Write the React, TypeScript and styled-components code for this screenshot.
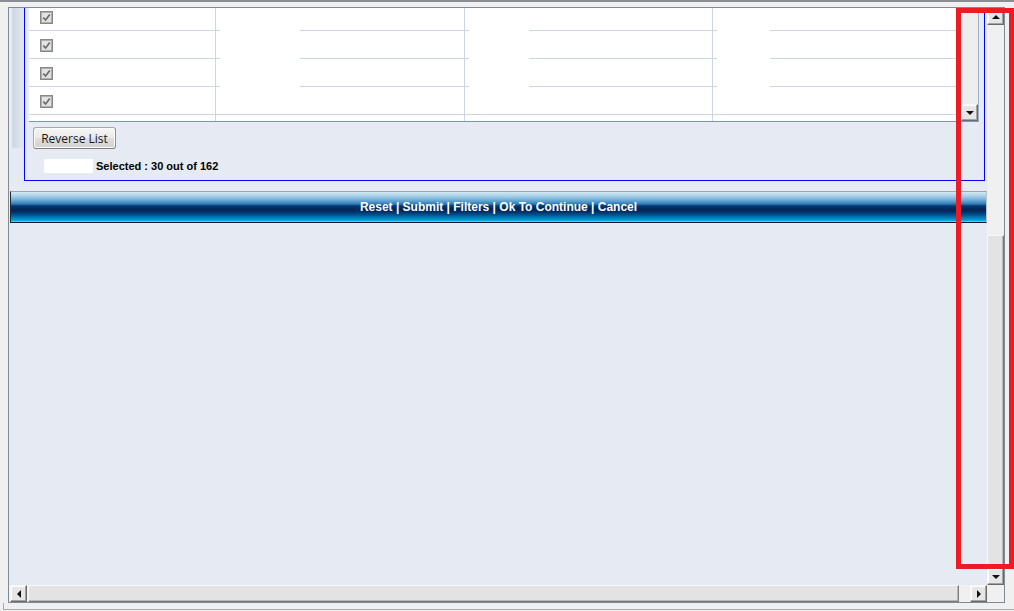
import React, { ReactElement } from 'react';
import styled, { createGlobalStyle, css } from 'styled-components';

const GlobalStyle = createGlobalStyle`
    html, body {
        margin: 0;
        padding: 0;
        background: #f0f0f0;
    }
    body {
        font-family: "Liberation Sans", Arial, sans-serif;
    }
`;

const Frame = styled.div`
    position: relative;
    width: 1014px;
    height: 611px;
    overflow: hidden;
    background: #f0f0f0;
    display: flex;
    flex-direction: column;
`;

const TopEdge = styled.div`
    height: 5px;
    border-top: 2px solid #8a8e93;
    background: #f0f0f0;
`;

const BottomEdge = styled.div`
    height: 6px;
    margin-left: 3px;
    border-bottom: 1px solid #a9a9a9;
    border-left: 1px solid #a9a9a9;
`;

const WindowRow = styled.div`
    display: flex;
    padding-left: 8px;
`;

const Window = styled.div`
    width: 995px;
    height: 594px;
    border: 1px solid #828a94;
    display: grid;
    grid-template-columns: 978px 17px;
    grid-template-rows: 577px 17px;
`;

const Viewport = styled.div`
    overflow: hidden;
    background: #e6eaf2;
`;

// page is scrolled down a little inside the viewport
const Page = styled.div`
    margin-top: -39px;
    display: flex;
    flex-direction: column;
`;

const PageTop = styled.div`
    display: flex;
    align-items: flex-start;
`;

const SideStrip = styled.div`
    width: 14px;
    height: 179px;
    margin-left: 1px;
    background: linear-gradient(to right, #eef2f6 0, #eef2f6 1px, #d3dde6 2px, #cfdae4 4px, #dde4ec 11px, #e5e9f1 14px);
`;

const FieldBox = styled.div`
    width: 950px;
    border: 1px solid #0000ff;
    padding: 4px 5px 7px 4px;
    display: flex;
    flex-direction: column;
    align-items: flex-start;
`;

const ListBox = styled.div`
    display: flex;
    border-top: 1px solid #7f9db9;
    border-bottom: 1px solid #7c97b3;
    border-right: 1px solid #9fb4cb;
    background: #fff;
`;

const ListGrid = styled.div`
    width: 932px;
    height: 146px;
    overflow: hidden;
    display: grid;
    grid-template-columns: 187px 4px 80px 165px 4px 60px 184px 4px 53px 191px;
    grid-auto-rows: 28px;
`;

const Cell = styled.div<{ $col: number; $row: number; $span?: number; $edge?: boolean }>`
    box-sizing: border-box;
    grid-column: ${(p) => p.$col};
    grid-row: ${(p) => `${p.$row} / span ${p.$span ?? 1}`};
    border-bottom: 1px solid #ccd5e4;
    background: #fff;
    display: flex;
    align-items: center;
    ${(p) =>
        p.$edge &&
        css`
            border-right: 1px solid #ccd5e4;
        `}
`;

const CheckBox = styled.span`
    box-sizing: border-box;
    width: 13px;
    height: 13px;
    margin-left: 11px;
    margin-top: 1px;
    border: 1px solid #878787;
    box-shadow: inset 0 0 0 1px #adadad;
    background: #e2e2e2;
    display: flex;
    align-items: center;
    justify-content: center;
`;

const ScrollBar = styled.div<{ $vertical?: boolean }>`
    display: flex;
    flex-direction: ${(p) => (p.$vertical ? 'column' : 'row')};
    background: #f0f0f0;
`;

const ListScroll = styled(ScrollBar)`
    width: 17px;
    height: 146px;
    background: #eeeeee;
`;

const Track = styled.div<{ $gap?: boolean }>`
    flex: ${(p) => (p.$gap ? '0 0 1px' : '1')};
`;

const Thumb = styled.div<{ $vertical?: boolean }>`
    box-sizing: border-box;
    background: #e3e3e3;
    border: 1px solid;
    border-color: #f8f8f8 #7a7a7a #7a7a7a #f8f8f8;
    box-shadow: inset -1px -1px #b8b8b8;
    ${(p) =>
        p.$vertical
            ? css`
                  height: 333px;
              `
            : css`
                  width: 931px;
                  margin-left: 1px;
              `}
`;

const ArrowButton = styled.div`
    box-sizing: border-box;
    flex: none;
    width: 17px;
    height: 17px;
    background: #e6e6e6;
    border: 1px solid;
    border-color: #f6f6f6 #6b6b6b #6b6b6b #f6f6f6;
    box-shadow: inset -1px -1px #a3a3a3, inset 1px 1px #ffffff;
    display: flex;
    align-items: center;
    justify-content: center;
`;

type Dir = 'up' | 'down' | 'left' | 'right';

const Triangle = styled.span<{ $dir: Dir }>`
    width: 0;
    height: 0;
    ${(p) =>
        p.$dir === 'up' &&
        css`
            border-left: 4px solid transparent;
            border-right: 4px solid transparent;
            border-bottom: 4px solid #111;
        `}
    ${(p) =>
        p.$dir === 'down' &&
        css`
            border-left: 4px solid transparent;
            border-right: 4px solid transparent;
            border-top: 4px solid #111;
        `}
    ${(p) =>
        p.$dir === 'left' &&
        css`
            border-top: 4px solid transparent;
            border-bottom: 4px solid transparent;
            border-right: 4px solid #111;
        `}
    ${(p) =>
        p.$dir === 'right' &&
        css`
            border-top: 4px solid transparent;
            border-bottom: 4px solid transparent;
            border-left: 4px solid #111;
        `}
`;

const Arrow = ({ dir }: { dir: Dir }) => (
    <ArrowButton>
        <Triangle $dir={dir} />
    </ArrowButton>
);

const ReverseButton = styled.button`
    box-sizing: border-box;
    width: 83px;
    height: 22px;
    margin: 5px 0 0 4px;
    padding: 0;
    border: 1px solid #707070;
    border-color: #a8a8a8 #8e8e8e #7e7e7e #a8a8a8;
    border-radius: 3px;
    background: linear-gradient(to bottom, #f6f6f6 0%, #ebebeb 48%, #dddddd 52%, #d2d2d2 100%);
    box-shadow: inset 0 0 0 1px #fcfcfc;
    font-family: "Open Sans", "Noto Sans", sans-serif;
    font-size: 12px;
    color: #1a1a1a;
`;

const SelectedRow = styled.div`
    display: flex;
    align-items: center;
    height: 14px;
    margin: 10px 0 0 15px;
`;

const CountField = styled.span`
    width: 49px;
    height: 14px;
    background: #fff;
`;

const CountLabel = styled.span`
    margin-left: 3px;
    font-size: 11px;
    font-weight: bold;
    color: #000;
`;

const ActionBar = styled.div`
    box-sizing: border-box;
    height: 32px;
    margin: 10px 0 0 1px;
    border-top: 1px solid #a3a3a3;
    border-left: 1px solid #1e2a33;
    border-right: 1px solid #b8c4cc;
    border-bottom: 1px solid #101820;
    box-shadow: inset 0 -1px #20e4ff;
    background: linear-gradient(
        to bottom,
        #d4e8f4 0%,
        #9fcbe6 16%,
        #5fa2d0 30%,
        #2f7bb6 40%,
        #053b73 46%,
        #002556 58%,
        #00346c 68%,
        #0062a0 80%,
        #0098cf 92%,
        #00c8ef 100%
    );
    display: flex;
    align-items: center;
    justify-content: center;
    color: #fff;
    font-size: 12px;
    font-weight: bold;
    line-height: 30px;
`;

const Corner = styled.div`
    background: #f0f0f0;
`;

const Highlight = styled.div`
    position: absolute;
    left: 956px;
    top: 8px;
    width: 58px;
    height: 561px;
    box-sizing: border-box;
    border: 5px solid #ed1c24;
`;

const Tick = () => (
    <svg width="9" height="9" viewBox="0 0 9 9">
        <path d="M1.2 4.6 L3.6 7 L7.8 1.4" fill="none" stroke="#6c6c6c" strokeWidth="1.7" />
    </svg>
);

const ROWS = 6;
const GROUPS = [
    { start: 2, last: true },
    { start: 5, last: true },
    { start: 8, last: false },
];

const ListRows = () => {
    const cells: ReactElement[] = [];
    for (let r = 1; r <= ROWS; r++) {
        cells.push(
            <Cell key={`a${r}`} $col={1} $row={r} $edge>
                <CheckBox>
                    <Tick />
                </CheckBox>
            </Cell>
        );
        GROUPS.forEach((g, i) => {
            cells.push(<Cell key={`g${i}a${r}`} $col={g.start} $row={r} />);
            // middle column of each group is one tall cell over the first five rows
            if (r === 1) cells.push(<Cell key={`g${i}b`} $col={g.start + 1} $row={1} $span={5} />);
            if (r === ROWS) cells.push(<Cell key={`g${i}b${r}`} $col={g.start + 1} $row={r} />);
            cells.push(<Cell key={`g${i}c${r}`} $col={g.start + 2} $row={r} $edge={g.last} />);
        });
    }
    return <ListGrid>{cells}</ListGrid>;
};

const App = (): ReactElement => {
    return (
        <>
            <GlobalStyle />
            <Frame>
                <TopEdge />
                <WindowRow>
                    <Window>
                        <Viewport>
                            <Page>
                                <PageTop>
                                    <SideStrip />
                                    <FieldBox>
                                        <ListBox>
                                            <ListRows />
                                            <ListScroll $vertical>
                                                <Arrow dir="up" />
                                                <Track />
                                                <Arrow dir="down" />
                                            </ListScroll>
                                        </ListBox>
                                        <ReverseButton>Reverse List</ReverseButton>
                                        <SelectedRow>
                                            <CountField />
                                            <CountLabel>Selected : 30 out of 162</CountLabel>
                                        </SelectedRow>
                                    </FieldBox>
                                </PageTop>
                                <ActionBar>Reset | Submit | Filters | Ok To Continue | Cancel</ActionBar>
                            </Page>
                        </Viewport>
                        <ScrollBar $vertical>
                            <Arrow dir="up" />
                            <Track />
                            <Thumb $vertical />
                            <Arrow dir="down" />
                        </ScrollBar>
                        <ScrollBar>
                            <Track $gap />
                            <Arrow dir="left" />
                            <Thumb />
                            <Track />
                            <Arrow dir="right" />
                        </ScrollBar>
                        <Corner />
                    </Window>
                </WindowRow>
                <BottomEdge />
                <Highlight />
            </Frame>
        </>
    );
};

export default App;
